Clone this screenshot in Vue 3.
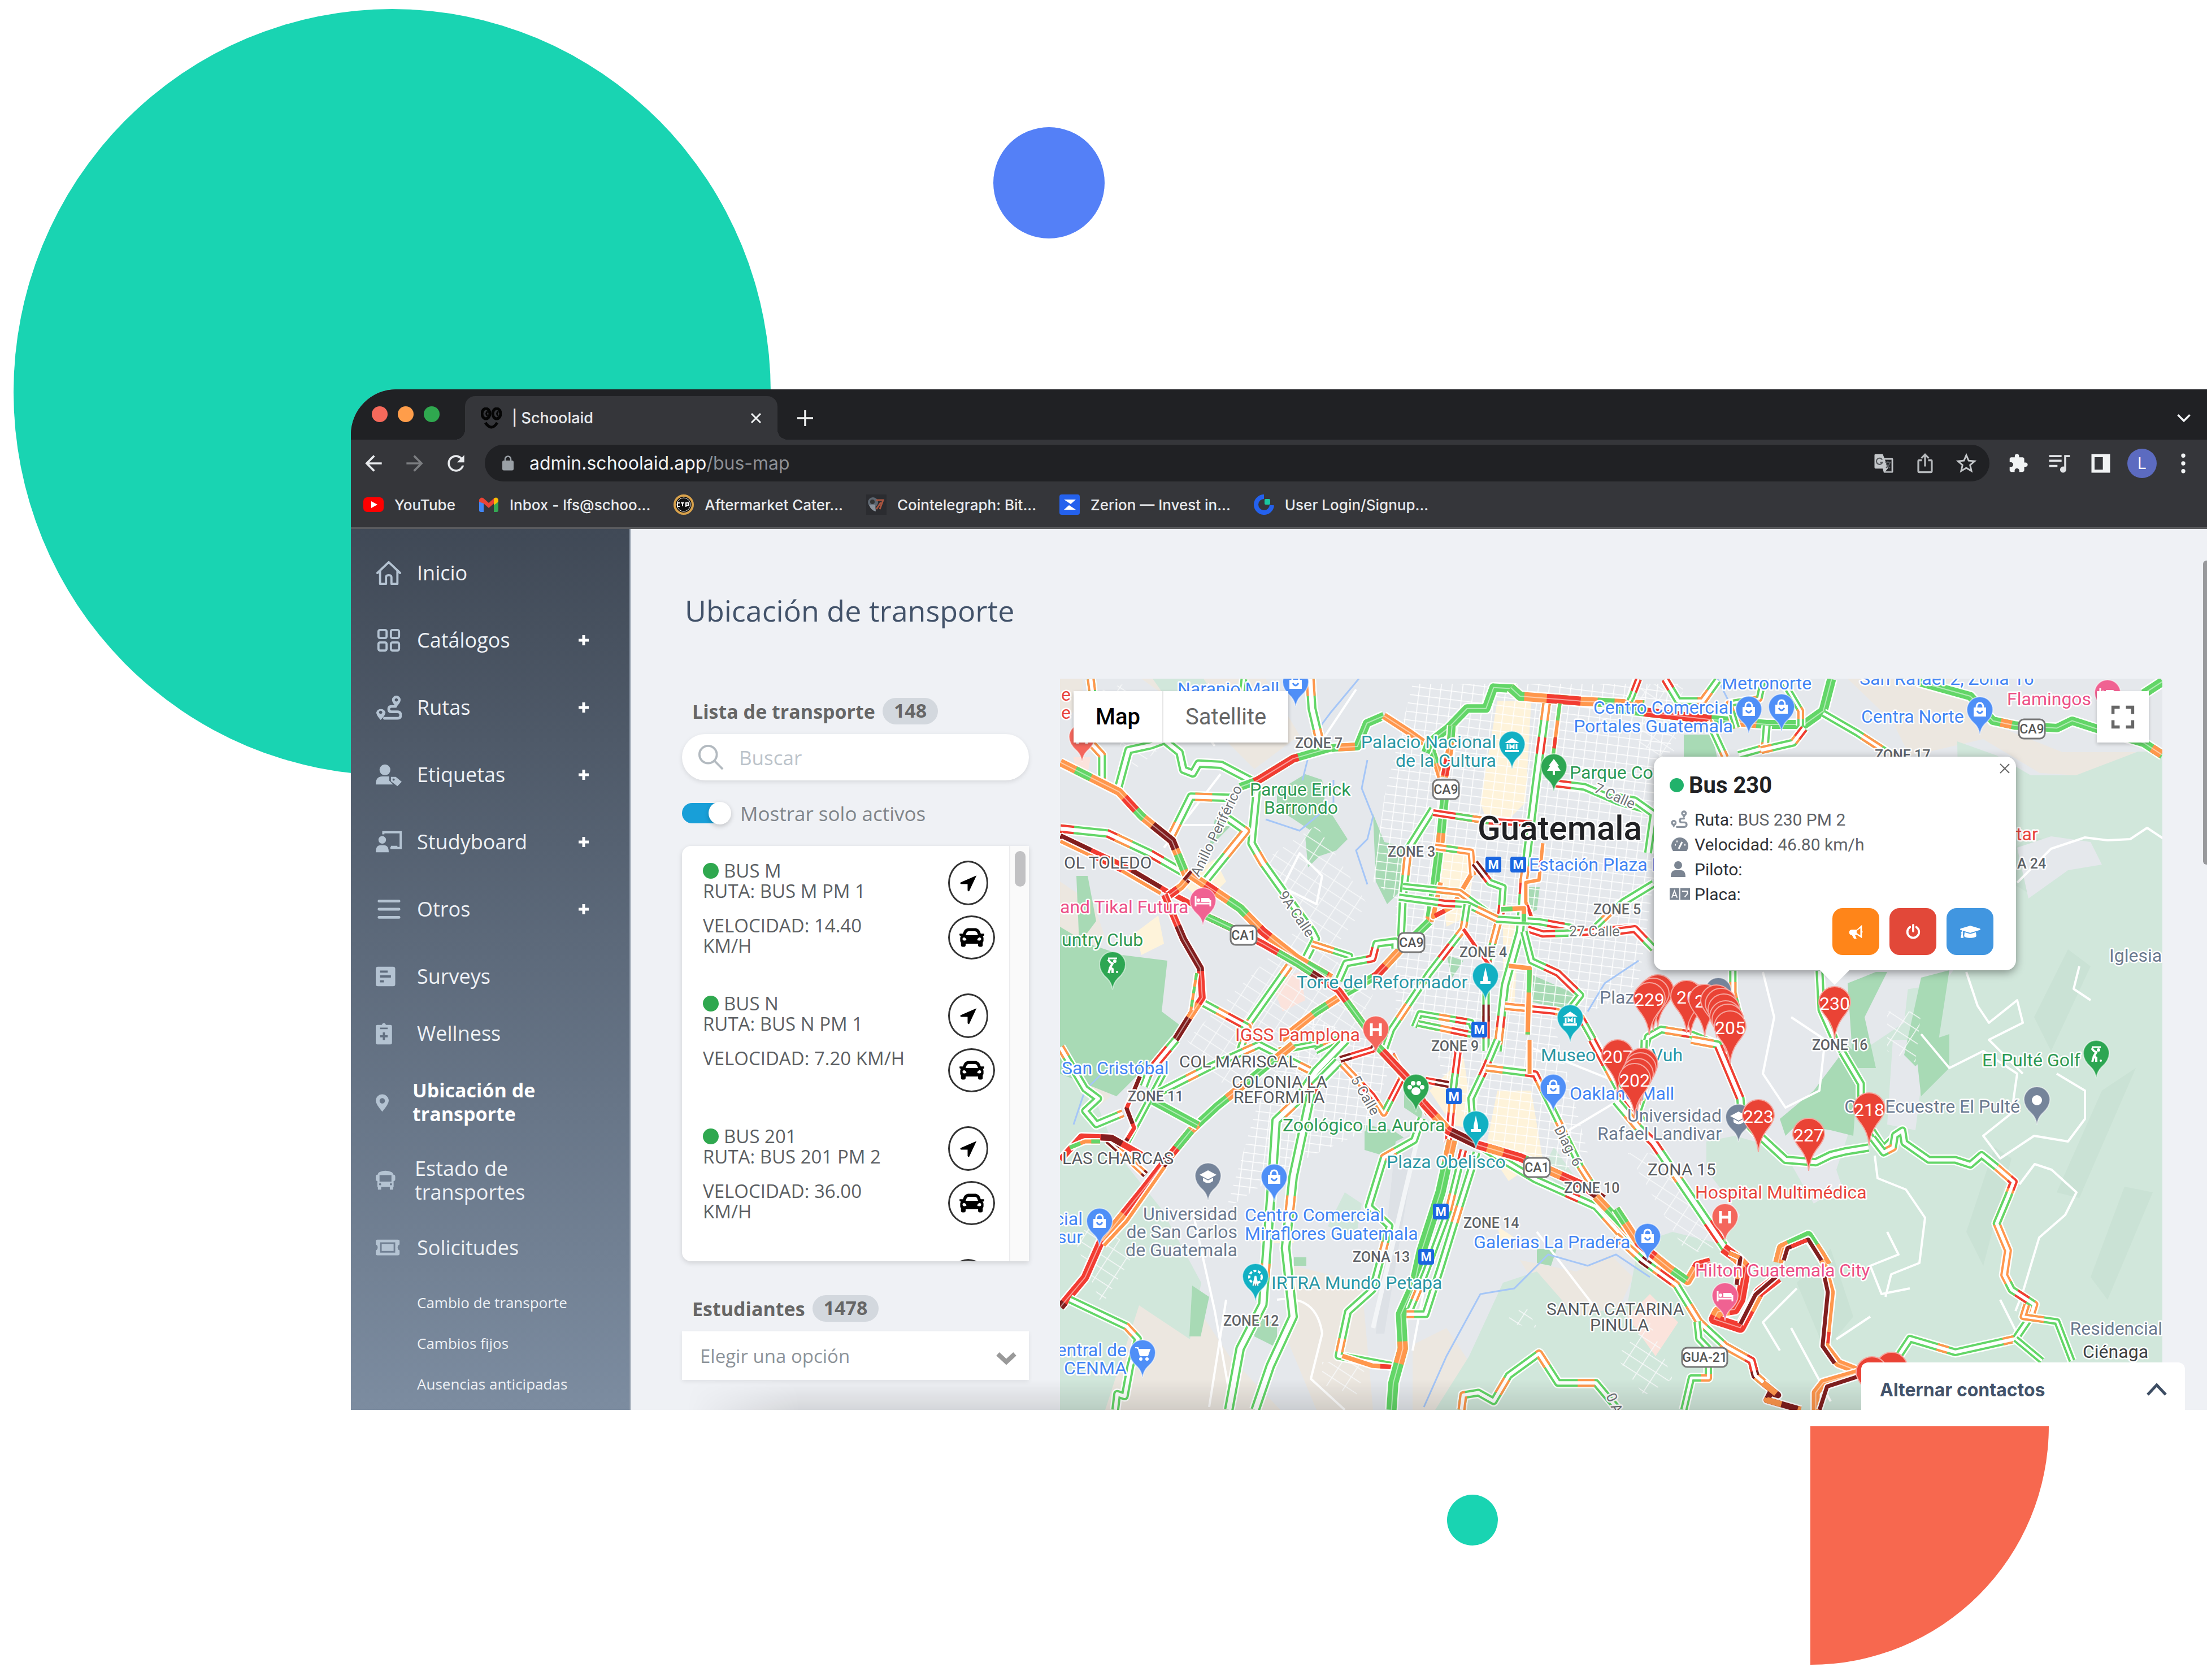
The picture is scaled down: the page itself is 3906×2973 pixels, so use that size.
<script setup>
import { ref } from 'vue'

const search = ref('')
const onlyActive = ref(true)
const student = ref('')

const icons = {
  back: ['0 0 24 24', '<path fill="#e8eaed" d="M20 11H7.83l5.59-5.59L12 4l-8 8 8 8 1.41-1.41L7.83 13H20v-2z"/>'],
  forward: ['0 0 24 24', '<path fill="#7b7d80" d="M4 11h12.17l-5.59-5.59L12 4l8 8-8 8-1.41-1.41L16.17 13H4v-2z"/>'],
  reload: ['0 0 24 24', '<path fill="#e8eaed" d="M17.65 6.35C16.2 4.9 14.21 4 12 4c-4.42 0-7.99 3.58-7.99 8s3.57 8 7.99 8c3.73 0 6.84-2.55 7.73-6h-2.08c-.82 2.33-3.04 4-5.65 4-3.31 0-6-2.69-6-6s2.69-6 6-6c1.66 0 3.14.69 4.22 1.78L13 11h7V4l-2.35 2.35z"/>'],
  lock: ['0 0 24 24', '<path fill="#9aa0a6" d="M18 8h-1V6c0-2.76-2.24-5-5-5S7 3.24 7 6v2H6c-1.1 0-2 .9-2 2v10c0 1.1.9 2 2 2h12c1.1 0 2-.9 2-2V10c0-1.1-.9-2-2-2zM15.1 8H8.9V6c0-1.71 1.39-3.1 3.1-3.1s3.1 1.39 3.1 3.1v2z"/>'],
  translate: ['0 0 24 24', '<path fill="#c4c7ca" d="M4 3h7l1.5 4H20q1 0 1 1v12q0 1-1 1h-8l-1-4H4q-1 0-1-1V4q0-1 1-1z"/><path fill="#202124" d="M13 8.2h6.8v11.6H13.5l2.5-3z"/><path d="M10.5 8.5a3 3 0 1 0 .2 2.5H8.5M13.5 11h5.5M16 10v1M18 11q-1 4-4 5M14.5 12.5q1 2.5 3.5 4" fill="none" stroke="#55585c" stroke-width="1.2"/><path d="M13 8.2h6.8v11.6H13.5" fill="none" stroke="#a5a8ab" stroke-width=".8"/>'],
  share: ['0 0 24 24', '<path fill="none" stroke="#b6b9bc" stroke-width="1.8" d="M9 9H6.5Q5.5 9 5.5 10v9.5q0 1 1 1h11q1 0 1-1V10q0-1-1-1H15M12 15V3.5M8.5 7 12 3.5 15.5 7"/>'],
  star: ['0 0 24 24', '<path fill="#c4c7ca" d="M22 9.24l-7.19-.62L12 2 9.19 8.63 2 9.24l5.46 4.73L5.82 21 12 17.27 18.18 21l-1.63-7.03L22 9.24zM12 15.4l-3.76 2.27 1-4.28-3.32-2.88 4.38-.38L12 6.1l1.71 4.04 4.38.38-3.32 2.88 1 4.28L12 15.4z"/>'],
  puzzle: ['0 0 24 24', '<path fill="#f1f3f4" transform="translate(2 2) scale(.83)" d="M20.5 11H19V7c0-1.1-.9-2-2-2h-4V3.5C13 2.12 11.88 1 10.5 1S8 2.12 8 3.5V5H4c-1.1 0-1.99.9-1.99 2v3.8H3.5c1.49 0 2.7 1.21 2.7 2.7s-1.21 2.7-2.7 2.7H2V20c0 1.1.9 2 2 2h3.8v-1.5c0-1.49 1.21-2.7 2.7-2.7 1.49 0 2.7 1.21 2.7 2.7V22H17c1.1 0 2-.9 2-2v-4h1.5c1.38 0 2.5-1.12 2.5-2.5S21.88 11 20.5 11z"/>'],
  music: ['0 0 24 24', '<path fill="#e1e3e6" d="M14 4H2v2h12V4zm0 4.5H2v2h12v-2zM2 15.5h8v-2H2v2zM16.5 4v11.18a3 3 0 1 0 2 2.82V6H22V4z"/>'],
  panel: ['0 0 24 24', '<path fill="#f1f3f4" fill-rule="evenodd" d="M3 3h18v18H3zM6 6v12h8V6z"/>'],
  dots: ['0 0 24 24', '<g fill="#f1f3f4"><circle cx="12" cy="4.5" r="2"/><circle cx="12" cy="12" r="2"/><circle cx="12" cy="19.5" r="2"/></g>'],
  close: ['0 0 24 24', '<path fill="none" stroke="#f1f3f4" stroke-width="3" d="M4 4l16 16M20 4 4 20"/>'],
  plus: ['0 0 24 24', '<path fill="none" stroke="#f1f3f4" stroke-width="3" d="M12 0v24M0 12h24"/>'],
  chevron: ['0 0 24 24', '<path fill="none" stroke="#f1f3f4" stroke-width="3" d="M3 7l9 9 9-9"/>'],
  face: ['0 0 37 38', '<g fill="none" stroke="#050505" stroke-width="5"><ellipse cx="9" cy="11" rx="7" ry="9"/><ellipse cx="28" cy="11" rx="7" ry="9"/><path d="M8 27q11 16 21 0"/></g><path d="M12 7q-5 4 0 8M31 7q-5 4 0 8" fill="none" stroke="#050505" stroke-width="3"/>'],
  youtube: ['0 0 36 36', '<rect y="5" width="36" height="26" rx="7" fill="#f00"/><path fill="#fff" d="M14 12l11 6-11 6z"/>'],
  gmail: ['0 0 36 36', '<path fill="#4285f4" d="M1 9h8v22H4q-3 0-3-3z"/><path fill="#34a853" d="M27 9h8v19q0 3-3 3h-5z"/><path fill="#ea4335" d="M1 9q4-6 8-2l9 8 9-8v9l-9 8-9-8L1 13z"/><path fill="#fbbc04" d="M27 7q5-4 8 2v4l-8 6z"/>'],
  ctp: ['0 0 36 36', '<circle cx="18" cy="18" r="16" fill="#111" stroke="#d9a24c" stroke-width="4"/><circle cx="18" cy="18" r="12" fill="none" stroke="#eee" stroke-width="1"/><path d="M11 15H7v6h4M13 15h6M16 15v6M22 22v-7h5v4h-5" fill="none" stroke="#fff" stroke-width="2"/>'],
  coin: ['0 0 36 36', '<rect width="36" height="36" fill="#2b2c30"/><ellipse cx="12" cy="14" rx="9" ry="9" fill="#5d6670"/><path d="M5 18q3 10 12 12l-1-12z" fill="#8b939c"/><path d="M18 10h12l-6 16M26 14l-8 12" fill="none" stroke="#a8543f" stroke-width="3"/><circle cx="11" cy="13" r="4" fill="#333"/>'],
  zerion: ['0 0 36 36', '<rect width="36" height="36" rx="4" fill="#2461ed"/><path fill="#fff" d="M8 9h21l-9 8zM8 27h21L17 19z"/>'],
  login: ['0 0 36 36', '<path d="M18 4a14 14 0 1 0 14 15" fill="none" stroke="#2461ed" stroke-width="8"/><rect x="19" y="8" width="10" height="10" rx="2" fill="#19c8a0"/>'],
  home: ['0 0 48 48', '<path fill="none" stroke="currentColor" stroke-width="4" stroke-linejoin="round" stroke-linecap="round" d="M3 24 24 4l21 20M8 20v24h11V32q0-4 5-4t5 4v12h11V20"/>'],
  grid: ['0 0 48 48', '<g fill="none" stroke="currentColor" stroke-width="4"><rect x="5" y="5" width="15" height="15" rx="3"/><rect x="28" y="5" width="15" height="15" rx="3"/><rect x="5" y="28" width="15" height="15" rx="3"/><rect x="28" y="28" width="15" height="15" rx="3"/></g>'],
  route: ['0 0 48 48', '<path fill="none" stroke="currentColor" stroke-width="5" stroke-linecap="round" d="M16 44h24q6 0 6-6t-6-6H29q-5 0-5-5t5-5h8"/><path fill="currentColor" fill-rule="evenodd" d="M9 47Q1 38 1 33a9 9 0 0 1 17 0q0 5-9 14zm0-17a3 3 0 1 0 .1 0zM38 23q-8-8-8-13a8 8 0 0 1 16 0q0 5-8 13zm0-16a3 3 0 1 0 .1 0z"/>'],
  usertag: ['0 0 48 48', '<circle cx="17" cy="15" r="10" fill="currentColor"/><path fill="currentColor" d="M0 42q0-15 12-15h13v8l7 7z"/><path fill="currentColor" fill-rule="evenodd" d="M28 28h9l11 9-8 8-12-9zm5 3a2 2 0 1 0 .1 0z"/>'],
  board: ['0 0 48 48', '<circle cx="12" cy="20" r="7" fill="currentColor"/><path fill="currentColor" d="M0 43q0-13 9-13h6q9 0 9 13zM28 36v-5h12v5z"/><path fill="none" stroke="currentColor" stroke-width="4" d="M14 10V6h32v29H27"/>'],
  bars: ['0 0 48 48', '<path stroke="currentColor" stroke-width="5" stroke-linecap="round" d="M6 9h37M6 24h37M6 39h37"/>'],
  survey: ['0 0 48 48', '<path fill="currentColor" fill-rule="evenodd" d="M4 6h28q4 0 4 4v28q0 4-4 4H4q-4 0-4-4V10q0-4 4-4zm4 7v4h14v-4zm0 9v4h20v-4zm0 9v4h7v-4z"/>'],
  clip: ['0 0 48 48', '<path fill="currentColor" fill-rule="evenodd" d="M3 8h8q4-7 8 0h8q3 0 3 3v30q0 3-3 3H3q-3 0-3-3V11q0-3 3-3zm5 5v3h14v-3zm5 9v5H8v4h5v5h4v-5h5v-4h-5v-5z"/>'],
  pin: ['0 0 48 48', '<path fill="currentColor" fill-rule="evenodd" d="M12 42Q0 28 0 22a12 12 0 0 1 24 0q0 6-12 20zm0-25a5 5 0 1 0 .1 0z"/>'],
  bus: ['0 0 48 48', '<path fill="currentColor" fill-rule="evenodd" d="M8 8q10-4 20 0 4 1 4 5 4 0 4 4v5q0 3-3 3v11h-1v5h-6v-5H10v5H4v-5H3V25q-3 0-3-3v-5q0-4 4-4 0-4 4-5zm-1 6v12h22V14zm1 15a2 2 0 1 0 .1 0zm20 0a2 2 0 1 0 .1 0z"/>'],
  ticket: ['0 0 48 48', '<path fill="currentColor" fill-rule="evenodd" d="M3 9h38q3 0 3 3v6a6 6 0 0 0 0 11v6q0 3-3 3H3q-3 0-3-3v-6a6 6 0 0 0 0-11v-6q0-3 3-3zm5 5v19h28V14zm3 3h22v13H11z"/>'],
  arrow: ['0 0 512 512', '<path d="M500 20 20 230q-30 40 20 50h190v190q12 48 50 20z"/>'],
  car: ['0 0 512 512', '<path d="M499.99 176h-59.87l-16.64-41.6C406.38 91.63 365.57 64 319.5 64h-127c-46.06 0-86.88 27.63-103.99 70.4L71.87 176H12.01C4.2 176-1.53 183.34.37 190.91l6 24C7.7 220.25 12.5 224 18.01 224h20.07C24.65 235.73 16 252.78 16 272v48c0 16.12 6.16 30.67 16 41.93V416c0 17.67 14.33 32 32 32h32c17.67 0 32-14.33 32-32v-32h256v32c0 17.67 14.33 32 32 32h32c17.67 0 32-14.33 32-32v-54.07c9.84-11.25 16-25.8 16-41.93v-48c0-19.22-8.65-36.27-22.07-48H494c5.51 0 10.31-3.75 11.64-9.09l6-24c1.89-7.57-3.84-14.91-11.65-14.91zm-352.06-17.83c7.29-18.22 24.94-30.17 44.57-30.17h127c19.63 0 37.28 11.95 44.57 30.17L384 208H128l19.93-49.83zM96 319.8c-19.2 0-32-12.76-32-31.9S76.8 256 96 256s48 28.71 48 47.85-28.8 15.95-48 15.95zm320 0c-19.2 0-48 3.19-48-15.95S396.8 256 416 256s32 12.76 32 31.9-12.8 31.9-32 31.9z"/>'],
  cap: ['0 0 640 512', '<path fill="currentColor" d="M622.34 153.2L343.4 67.5c-15.2-4.67-31.6-4.67-46.79 0L17.66 153.2c-23.54 7.23-23.54 38.36 0 45.59l48.63 14.94c-10.67 13.19-17.23 29.28-17.88 46.9C38.78 266.15 32 276.11 32 288c0 10.78 5.68 19.85 13.86 25.65L20.33 428.53C18.11 438.52 25.71 448 35.94 448h56.11c10.24 0 17.84-9.48 15.62-19.47L82.14 313.65C90.32 307.85 96 298.78 96 288c0-11.57-6.47-21.25-15.66-26.87.76-15.02 8.44-28.3 20.69-36.72L296.6 284.5c9.06 2.78 26.44 6.25 46.79 0l278.95-85.7c23.55-7.24 23.55-38.36 0-45.6zM352.79 315.09c-28.53 8.76-52.84 3.92-65.59 0l-145.02-44.55L128 384c0 35.35 85.96 64 192 64s192-28.65 192-64l-14.18-113.47-145.03 44.56z"/>'],
  horn: ['0 0 32 32', '<path fill="currentColor" fill-rule="evenodd" d="M27 3v11q3 2 0 4v10l-9-6h-4l3 7h-5l-4-7q-5 0-5-5t5-5h9zm-3 6-7 5v4l7 5z"/>'],
  power: ['0 0 32 32', '<path fill="none" stroke="currentColor" stroke-width="4" stroke-linecap="round" d="M16 3v12M10 7a11 11 0 1 0 12 0"/>'],
  search: ['0 0 48 48', '<g fill="none" stroke="#b3bac0" stroke-width="4"><circle cx="19" cy="19" r="16"/><path d="m31 31 15 15"/></g>'],
  gauge: ['0 0 32 32', '<path fill="#7b8592" d="M4 28a15 15 0 1 1 24 0z"/><path d="m14 24 6-12M7 17h2M10 11h2M24 17h2" stroke="#fff" stroke-width="3"/>'],
  person: ['0 0 32 32', '<circle cx="13" cy="9" r="7" fill="#7b8592"/><path fill="#7b8592" d="M0 30q0-12 8-12h10q8 0 8 12z"/>'],
  plate: ['0 0 38 32', '<path fill="#7b8592" d="M0 5h38v22H0z"/><path d="m4 23 5-13 5 13M6 19h6M19 5v22M23 11h10v5l-5 6" fill="none" stroke="#fff" stroke-width="2"/>'],
  route2: ['0 0 48 48', '<path fill="none" stroke="#8a939e" stroke-width="5" stroke-linecap="round" d="M16 44h20q6 0 6-6t-6-6h-7q-5 0-5-5t5-5h6"/><circle cx="8" cy="33" r="5" fill="none" stroke="#8a939e" stroke-width="5"/><path d="m3 37 5 9 5-9z" fill="#8a939e"/><circle cx="35" cy="8" r="5" fill="none" stroke="#8a939e" stroke-width="5"/><path d="m30 12 5 10 5-10z" fill="#8a939e"/>'],
  full: ['0 0 48 48', '<path fill="none" stroke="#666" stroke-width="6" d="M5 18V5h13M30 5h13v13M43 30v13H30M18 43H5V30"/>'],
  up: ['0 0 36 24', '<path fill="none" stroke="#3d4d63" stroke-width="5" d="M2 21 18 4l16 17"/>'],
  down: ['0 0 36 24', '<path fill="none" stroke="#999" stroke-width="8" d="M3 4l15 14L33 4"/>'],
}

const bookmarks = [
  ['youtube', 'YouTube'],
  ['gmail', 'Inbox - lfs@schoo...'],
  ['ctp', 'Aftermarket Cater...'],
  ['coin', 'Cointelegraph: Bit...'],
  ['zerion', 'Zerion — Invest in...'],
  ['login', 'User Login/Signup...'],
]

const menu = [
  { icon: 'home', label: 'Inicio' },
  { icon: 'grid', label: 'Catálogos', more: true },
  { icon: 'route', label: 'Rutas', more: true },
  { icon: 'usertag', label: 'Etiquetas', more: true },
  { icon: 'board', label: 'Studyboard', more: true },
  { icon: 'bars', label: 'Otros', more: true },
  { icon: 'survey', label: 'Surveys' },
  { icon: 'clip', label: 'Wellness', kind: 'short' },
  { icon: 'pin', label: 'Ubicación de transporte', kind: 'current' },
  { icon: 'bus', label: 'Estado de transportes', kind: 'double' },
  { icon: 'ticket', label: 'Solicitudes' },
]
const submenu = ['Cambio de transporte', 'Cambios fijos', 'Ausencias anticipadas']

const buses = [
  { name: 'BUS M', route: 'BUS M PM 1', speed: '14.40' },
  { name: 'BUS N', route: 'BUS N PM 1', speed: '7.20' },
  { name: 'BUS 201', route: 'BUS 201 PM 2', speed: '36.00' },
  { name: 'BUS 202', route: 'BUS 202 PM 2', speed: '21.60' },
]

const G = '#63d668'
const O = '#ff974d'
const R = '#f23c32'
const D = '#811f1f'

// Roads per map quadrant: [points, width, base colour, [[overlay colour, dash pattern]...], hollow]
const quadrants = [
  {
    t: 'translate(1860 1180) scale(.6696 .4337)',
    roads: [
      ['105,50 110,110', 14, G, [[O, '20 200']], 1],
      ['105,310 135,360 135,470', 14, G, [[O, '30 40']], 1],
      ['175,510 205,340 265,320 300,300 340,350 350,420 375,435 390,395 450,400 530,465', 15, G, [], 1],
      ['315,700 370,530 480,535', 15, G, [[O, '30 60']], 1],
      ['25,660 150,680 260,760 350,840', 15, G, [[R, '24 60'], [O, '0 100 30 60']], 1],
      ['545,490 530,720 560,800 620,930 690,1080 700,1110 670,1200', 15, G, [[O, '0 120 24 140']], 1],
      ['460,610 515,670 410,870', 15, G, [[O, '0 40 60 30']], 1],
      ['510,50 505,110', 12, G, [], 1],
      ['685,50 690,170 710,300', 16, G, [[O, '30 60']], 1],
      ['700,345 750,330 810,325 835,230 880,200', 14, G, [[O, '0 40 30 80']]],
      ['880,200 950,270 1005,330 1030,450', 12, O, [[G, '0 90 40 20']]],
      ['1230,90 1170,85 1150,170 1100,170 1050,250 1000,310 990,350', 15, G, []],
      ['1060,240 1055,330 1040,450', 13, O, [[R, '0 60 30 60'], [G, '30 300']]],
      ['1040,540 1030,700 1015,880 1000,1040', 15, G, [[O, '0 60 30 60']]],
      ['1000,1040 920,1160 860,1260 780,1330', 14, G, [[O, '0 60 50 40'], [R, '0 110 30 100']]],
      ['780,1330 700,1410 610,1520', 13, O, [[G, '0 40 30 40']]],
      ['1215,85 1240,120 1400,140 1568,155', 16, O, [[G, '30 50'], [R, '0 70 60 60']]],
      ['1310,150 1280,500 1250,870 1240,1080 1200,1300 1180,1568', 15, G, [[R, '0 60 30 160'], [O, '30 260']], 1],
      ['1345,150 1320,450', 6, O, [[G, '30 30'], [R, '0 60 20 80']]],
      ['1300,720 1290,870 1255,880 1255,960 1280,1060', 6, O, [[R, '0 30 20 50']]],
      ['1010,580 945,740 930,950 925,1110', 14, G, [[O, '0 90 40 60']], 1],
      ['1010,595 1160,630 1270,640', 12, R, [[G, '0 40 60 60'], [O, '0 70 20 200']], 1],
      ['1015,735 1110,755 1115,850', 12, O, [[G, '0 20 20 50']], 1],
      ['1110,850 1060,980 1010,1020 1030,880', 8, O, [[R, '0 80 20 80']]],
      ['1120,800 1160,880 1195,900 1190,1000 1150,1230 1150,1568', 13, G, [[R, '40 60'], [D, '30 250'], [O, '0 130 40 90']], 1],
      ['930,895 1080,920 1160,1010', 12, G, [[O, '0 60 60 60']], 1],
      ['920,940 1040,965 1100,970 1180,1030 1290,1040 1380,1065', 13, G, [[R, '0 70 30 100'], [O, '0 140 40 100']], 1],
      ['1260,1070 1300,1090 1400,1085 1500,1070 1540,1065 1568,1110', 13, R, [[G, '0 50 40 60']], 1],
      ['1100,970 1090,1070 1000,1250 900,1480 880,1568', 13, G, [[R, '0 80 30 110'], [O, '0 30 30 120']], 1],
      ['1090,1070 1140,1180 1170,1240', 6, R, []],
      ['690,1130 790,1180 790,1220', 12, G, [[O, '40 60']], 1],
      ['760,1280 780,1210 850,1190 860,1130 910,1120 910,1150', 14, G, [[R, '0 70 30 200'], [O, '0 180 60 60']], 1],
      ['630,1220 520,1460', 14, G, [[O, '20 100']], 1],
      ['400,1370 520,1470 500,1568', 14, O, [[G, '30 30'], [R, '0 50 30 80']], 1],
      ['600,1568 760,1520 700,1568', 12, G, [[O, '20 60']], 1],
      ['960,1470 975,1415 1110,1450 1120,1500', 12, G, [[O, '0 60 20 30'], [R, '0 90 20 300']], 1],
      ['970,1455 1110,1500', 12, O, [[G, '40 30'], [R, '0 60 30 90']], 1],
      ['1250,1080 1270,1200 1340,1250 1400,1340 1375,1390', 13, G, [[R, '0 80 70 40']], 1],
      ['1200,1385 1330,1405 1400,1430 1450,1568', 13, R, [[O, '50 40'], [G, '0 150 30 30']], 1],
      ['1210,1220 1265,1230 1260,1500', 8, O, [[G, '0 40 40 30']], 1],
      ['1330,475 1410,490 1500,550 1568,580', 14, G, [[R, '30 400']], 1],
      ['1568,910 1500,970 1440,1060', 12, G, [[O, '0 40 50 50']], 1],
      ['1550,50 1530,140', 12, G, [[R, '20 40']], 1],
      ['1190,990 1250,985 1250,1040', 8, O, [[G, '20 30']], 1],
      ['25,390 180,510 240,610 320,710 360,860', 14, O, [[G, '0 30 30 60'], [R, '0 130 30 60'], [D, '0 200 60 300']]],
      ['25,690 100,745 190,810 300,910 400,990', 9, R, [[D, '60 80']]],
      ['25,712 100,767 190,835 290,925', 6, O, [[R, '0 60 60 40']]],
      ['740,330 640,375 545,465 500,490', 14, G, [[R, '0 60 90 100']]],
      ['375,840 345,895 310,935', 13, O, [[D, '20 20'], [R, '0 40 30 30']]],
      ['300,930 350,1110 395,1230 400,1350 370,1420 310,1568', 12, R, [[D, '0 60 90 30'], [O, '0 210 30 20']]],
      ['385,1250 380,1300 370,1400', 5, O, [[G, '12 12']]],
      ['370,850 500,985 560,1080 650,1190 740,1270', 15, O, [[R, '0 30 24 70'], [G, '0 80 40 60']]],
      ['400,1010 490,1075 560,1130 650,1210 760,1320 850,1510', 12, R, [[D, '0 20 40 120'], [G, '70 80']]],
    ],
  },
  {
    t: 'translate(2860 1180) scale(.6671 .4337)',
    roads: [
      ['0,170 80,185 250,215 400,235 500,235 550,180 572,50', 16, G, [[R, '0 50 120 300'], [O, '0 200 50 50']]],
      ['800,60 940,120 1000,220 1060,240 1170,250 1210,220 1270,250 1400,310 1450,360', 15, G, [[O, '0 170 20 90']]],
      ['1450,60 1400,110', 16, G, []],
      ['550,190 640,270 720,350', 13, G, [[O, '0 80 40 30']], 1],
      ['400,240 395,330 325,360', 14, G, [[O, '0 30 20 60']], 1],
      ['385,340 470,310 500,250', 14, G, [[O, '20 40'], [R, '0 70 20 40']], 1],
      ['245,220 290,370', 13, G, [[O, '20 40']], 1],
      ['130,50 165,140 230,140 270,55', 14, G, [[R, '20 60'], [O, '0 80 30 30']], 1],
      ['60,50 40,130', 12, G, [[R, '24 30']], 1],
      ['390,60 380,130 300,150 320,250', 12, O, [[G, '30 20']], 1],
      ['440,50 490,180 490,240', 12, G, [[O, '0 60 20 20']], 1],
      ['0,530 50,545 100,600 85,760', 14, G, [], 1],
      ['100,885 20,960 0,990', 14, G, [], 1],
      ['0,1080 50,1070 100,1150', 14, R, [[G, '0 60 40 20']], 1],
      ['540,1240 545,1400 580,1520 600,1568', 14, G, [], 1],
      ['310,1240 310,1330 330,1450', 13, G, [[O, '0 20 30 20']], 1],
      ['75,1568 85,1510 120,1480 200,1500 280,1550', 14, G, [[O, '0 60 30 40'], [R, '0 90 14 80']], 1],
    ],
  },
  {
    t: 'translate(1860 1840) scale(.6696 .4337)',
    roads: [
      ['330,0 260,130 245,190', 15, G, [[R, '0 20 60 20']], 1],
      ['25,30 90,200 125,240 90,290 120,345 190,300', 14, G, [[O, '20 200']], 1],
      ['300,130 200,420', 12, G, [], 1],
      ['235,150 200,280 220,360 180,460', 7, R, [[D, '30 30']]],
      ['150,410 180,450 250,550', 12, O, [[D, '24 60']], 1],
      ['25,490 80,395 160,400 240,470', 11, R, [[D, '0 90 40 20']]],
      ['50,440 90,415 130,415', 7, O, [[G, '20 20']]],
      ['280,220 420,110 550,20 690,130', 14, G, [[O, '0 60 20 30']], 1],
      ['780,0 700,130 650,250 595,330 590,450 560,1080 500,1260 470,1510', 17, G, [[O, '0 150 24 120']], 1],
      ['760,90 690,200 640,560 620,850 640,1130 580,1330 540,1510', 17, G, [[O, '0 260 30 120'], [R, '0 60 14 600']], 1],
      ['640,20 440,270 370,370', 14, G, [[O, '40 70']]],
      ['270,250 390,350', 14, G, [[O, '0 90 20 20']]],
      ['370,370 290,520 250,600 130,830 90,970 25,1090', 14, R, [[G, '40 400'], [D, '0 60 20 80'], [O, '0 190 60 70']]],
      ['300,520 200,740 140,840', 6, O, []],
      ['765,80 850,40 870,0', 12, R, [[D, '20 40']], 1],
      ['770,100 850,230 880,300 930,150 900,60', 12, R, [[O, '50 40'], [G, '0 120 20 40']], 1],
      ['1060,185 990,165', 12, R, [[D, '30 30']], 1],
      ['980,320 960,410 880,480 840,680 895,760 850,1020 785,1110 760,1290 900,1330', 14, G, [[O, '0 80 24 90']], 1],
      ['770,1290 850,1330 900,1335', 8, O, [[R, '0 70 40 20']], 1],
      ['1080,0 1065,180 1050,420', 13, R, [[G, '0 60 50 60'], [O, '0 110 20 70']], 1],
      ['1180,0 1150,110 1110,240 1120,430', 13, G, [[R, '0 40 30 60']], 1],
      ['1150,115 1280,140 1400,520 1450,640', 13, G, [[O, '30 60'], [R, '0 70 30 200']], 1],
      ['1265,0 1265,140', 7, O, []],
      ['1430,0 1500,200 1568,340', 14, G, [[R, '50 50'], [O, '0 60 20 60']], 1],
      ['1140,440 1280,570 1440,680 1568,900', 14, G, [[R, '0 170 24 80'], [O, '0 250 50 30']], 1],
      ['1060,410 1030,620 980,860 960,1000 925,1120 930,1260 905,1400 900,1510', 18, G, [[O, '40 330']]],
      ['1090,450 1050,700 990,950 950,1100', 13, G, [[O, '0 80 30 60'], [R, '30 300']], 1],
      ['1125,460 1080,680 1030,930 990,1120 940,1120', 14, G, [[O, '0 100 30 90']], 1],
      ['865,30 950,170 1000,300', 14, G, [[R, '0 10 80 20']]],
      ['985,260 1050,370 1130,430 1240,480 1400,590 1460,650', 15, R, [[O, '0 30 30 50'], [D, '0 70 50 150'], [G, '0 210 40 50']]],
      ['1440,640 1568,850', 14, G, [[O, '30 40']]],
      ['50,1060 200,1170 230,1220 210,1330 195,1455 175,1445 170,1510', 14, G, [[O, '0 110 20 100']], 1],
      ['1085,1510 1090,1450 1130,1440 1170,1475 1210,1370 1290,1280 1340,1400 1440,1400 1500,1510', 14, G, [[O, '30 70']], 1],
    ],
  },
  {
    t: 'translate(2860 1840) scale(.6671 .4337)',
    roads: [
      ['200,0 270,20 330,240 335,320 380,390 450,490 530,500 570,470 610,455 670,440', 15, G, [[R, '0 50 100 500'], [O, '40 800']], 1],
      ['680,370 710,440 750,380', 12, G, [], 1],
      ['680,400 710,460 735,440 740,390 760,370 765,420 830,490 900,490 940,510 970,470 1010,520', 14, G, [[O, '0 40 12 400']], 1],
      ['1010,520 1055,580 1040,640 1010,750 1040,860 1030,960 1050,1020 1110,1080 1100,1130', 14, O, [[G, '0 60 60 50'], [R, '0 30 24 170']], 1],
      ['1100,1130 1060,1220 900,1275 780,1220 750,1290', 14, G, [[O, '0 50 20 50']], 1],
      ['1090,1080 1080,1130 1170,1150 1190,1230 1210,1310', 12, G, [[O, '60 500']], 1],
      ['1060,1220 1130,1310', 12, G, [], 1],
      ['600,50 650,180 650,240', 14, G, [], 1],
      ['75,0 70,240 50,330', 13, G, [], 1],
      ['0,250 60,360 100,420 290,850', 16, G, [[O, '0 30 30 60'], [R, '0 80 40 70']], 1],
      ['0,690 60,830 140,930 190,985 215,920 250,905', 14, O, [[R, '0 70 40 30'], [G, '30 120']]],
      ['0,800 70,900 160,1000 220,1150 290,1250 360,1310 370,1370 400,1410', 14, G, [[O, '50 40'], [D, '0 60 20 200'], [R, '0 100 30 90']], 1],
      ['390,1400 430,1450 410,1440 400,1470 490,1510', 11, D, [[O, '30 30']]],
      ['215,1150 220,1220 245,1260 245,1380 200,1380 180,1510', 13, G, [[O, '0 100 20 80']], 1],
      ['285,850 320,890 345,930 330,1060 315,1100 270,1110 260,1140 330,1175 380,1030 430,970', 18, R, [[O, '0 20 30 70']]],
      ['300,870 330,890 320,1000', 7, D, [[O, '20 20']]],
      ['330,1160 370,1040 430,960', 7, D, []],
      ['430,910 440,850 510,800 540,870 560,920', 17, G, [[O, '40 60']]],
      ['445,900 455,850 510,815 545,900', 7, D, [[R, '0 30 30 60']]],
      ['550,920 570,1030 555,1250 590,1320 640,1350', 14, O, [[R, '0 120 20 40']]],
      ['548,930 562,1030 548,1250 580,1320', 7, D, []],
      ['640,1360 550,1400 530,1440 530,1510', 14, O, []],
      ['640,1375 560,1415 540,1510', 7, D, []],
    ],
  },
]

// Labels: [text, x, baseline, class, anchor]
const labels = [
  ['Naranjo Mall', 2084, 1230, 'blue'],
  ['Centro Comercial', 3067, 1263, 'blue', 'end'], ['Portales Guatemala', 3067, 1296, 'blue', 'end'],
  ['Metronorte', 3047, 1220, 'blue'], ['San Rafael 2, Zona 16', 3291, 1212, 'blue'],
  ['Centra Norte', 3294, 1279, 'blue'], ['Estación Plaza B', 2706, 1541, 'blue'],
  ['San Cristóbal', 1879, 1901, 'blue'], ['Oakland Mall', 2778, 1946, 'blue'],
  ['Centro Comercial', 2203, 2161, 'blue'], ['Miraflores Guatemala', 2203, 2194, 'blue'],
  ['Galerias La Pradera', 2608, 2209, 'blue'],
  ['cial', 1916, 2168, 'blue', 'end'], ['sur', 1916, 2200, 'blue', 'end'],
  ['entral de', 1994, 2400, 'blue', 'end'], ['CENMA', 1994, 2432, 'blue', 'end'],
  ['Palacio Nacional', 2648, 1324, 'teal', 'end'], ['de la Cultura', 2648, 1357, 'teal', 'end'],
  ['Torre del Reformador', 2295, 1749, 'teal'], ['Plaza Obelisco', 2454, 2067, 'teal'],
  ['IRTRA Mundo Petapa', 2250, 2281, 'teal'], ['Museo', 2727, 1878, 'teal'], ['Vuh', 2978, 1878, 'teal', 'end'],
  ['Plaz', 2831, 1776, 'slate'],
  ['Parque Erick', 2212, 1408, 'green'], ['Barrondo', 2237, 1440, 'green'], ['Parque Co', 2778, 1378, 'green'],
  ['untry Club', 1879, 1674, 'green'], ['Zoológico La Aurora', 2270, 2002, 'green'], ['El Pulté Golf', 3508, 1887, 'green'],
  ['IGSS Pamplona', 2186, 1842, 'red'], ['Hospital Multimédica', 3000, 2121, 'red'], ['tar', 3568, 1487, 'red'],
  ['e', 1878, 1240, 'red'], ['e', 1878, 1272, 'red'],
  ['and Tikal Futura', 1876, 1616, 'pink'], ['Flamingos', 3552, 1248, 'pink'], ['Hilton Guatemala City', 3000, 2259, 'pink'],
  ['Universidad', 2190, 2159, 'slate', 'end'], ['de San Carlos', 2190, 2191, 'slate', 'end'], ['de Guatemala', 2190, 2223, 'slate', 'end'],
  ['Universidad', 3047, 1985, 'slate', 'end'], ['Rafael Landivar', 3047, 2017, 'slate', 'end'],
  ['Club Ecuestre El Pulté', 3575, 1969, 'slate', 'end'], ['Iglesia', 3733, 1702, 'slate'],
  ['Residencial', 3827, 2362, 'slate', 'end'], ['Ciénaga', 3686, 2403, 'dark'],
  ['ZONE 7', 2292, 1324, 'zone'], ['ZONE 3', 2456, 1516, 'zone'], ['ZONE 5', 2820, 1618, 'zone'], ['ZONE 4', 2583, 1694, 'zone'],
  ['ZONE 9', 2533, 1860, 'zone'], ['ZONE 17', 3318, 1345, 'zone'], ['ZONE 16', 3207, 1858, 'zone'], ['A 24', 3570, 1537, 'zone'],
  ['ZONE 11', 1996, 1949, 'zone'], ['ZONE 10', 2768, 2111, 'zone'], ['ZONE 14', 2590, 2173, 'zone'], ['ZONA 13', 2394, 2233, 'zone'],
  ['ZONE 12', 2165, 2346, 'zone'],
  ['ZONA 15', 2916, 2080, 'area'], ['OL TOLEDO', 1883, 1537, 'area'], ['COL MARISCAL', 2087, 1889, 'area'],
  ['COLONIA LA', 2180, 1925, 'area'], ['REFORMITA', 2183, 1952, 'area'], ['LAS CHARCAS', 1880, 2060, 'area'],
  ['SANTA CATARINA', 2737, 2327, 'area'], ['PINULA', 2814, 2355, 'area'],
  ['27 Calle', 2777, 1657, 'street'], ['Guatemala', 2615, 1486, 'city'],
]
const slanted = [
  ['Anillo Periférico', 2122, 1553, -64], ['9A Calle', 2262, 1584, 56], ['7 Calle', 2820, 1401, 24],
  ['5 Calle', 2390, 1910, 60], ['Diag. 6', 2750, 1998, 62], ['0 Av.', 2842, 2470, 66],
]
const shields = [
  ['CA9', 2559, 1397, 46], ['CA1', 2201, 1655, 46], ['CA9', 2498, 1668, 46], ['CA9', 3596, 1290, 46], ['CA1', 2720, 2066, 46], ['GUA-21', 3017, 2402, 80],
]
const metros = [[2643, 1530], [2687, 1530], [2618, 1822], [2573, 1940], [2550, 2144], [2524, 2224]]

const BAG = '<path d="M-11-5h22V11h-22z" fill="#fff"/><path d="M-6-5q0-8 6-8t6 8" fill="none" stroke="#fff" stroke-width="3"/><path d="M-5 1q5 8 10 0" fill="none" stroke="#4f8ff7" stroke-width="3"/>'
const HOUSE = '<path d="M-13-3 0-12l13 9zM-12 9h24v4h-24z" fill="#fff"/><path d="M-8 8v-9M8 8v-9M-3 7v-6l3 3 3-3v6" fill="none" stroke="#fff" stroke-width="3"/>'
const TOWER = '<path d="m0-16 4 18v6h5v5H-9V8h5V2z" fill="#fff"/>'
const GOLF = '<path d="M-8-12H8" stroke="#fff" stroke-width="3"/><circle cx="4" cy="-7" r="3" fill="#fff"/><path d="M-8-10-4-5 0-3-4 4l4 3v7M-4 4l-3 10" fill="none" stroke="#fff" stroke-width="4"/><circle cx="8" cy="12" r="2" fill="#fff"/>'
const BED = '<path d="M-13-9V9M-13 4H13M13 9V-2" stroke="#fff" stroke-width="3"/><path d="M-3-6H9q4 0 4 7H-3z" fill="#fff"/><circle cx="-8" cy="-2" r="3" fill="#fff"/>'
const HOSP = '<path d="M-8-11V11M8-11V11M-8 0H8" stroke="#fff" stroke-width="5"/>'
const CAP = '<path d="m0-11 15 8L0 5l-15-8z" fill="#fff"/><path d="M-9 2v6q9 7 18 0V2L0 7z" fill="#fff"/>'
const TREE = '<path d="M0-15 9-3H6l6 9H2v7h-4V6h-10l6-9h-3z" fill="#fff"/>'
const PAW = '<g fill="#fff"><ellipse cx="0" cy="6" rx="8" ry="7"/><circle cx="-11" cy="-1" r="4"/><circle cx="-5" cy="-8" r="4"/><circle cx="5" cy="-8" r="4"/><circle cx="11" cy="-1" r="4"/></g>'
const CART = '<path d="M-13-10h5l4 14H9l4-11H-6" fill="#fff" stroke="#fff" stroke-width="2"/><circle cx="-3" cy="10" r="3" fill="#fff"/><circle cx="8" cy="10" r="3" fill="#fff"/>'
const WHEEL = '<circle r="11" fill="none" stroke="#fff" stroke-width="4" stroke-dasharray="5 3"/><path d="M0 0v15M-4 15 0-2l4 17" stroke="#fff" stroke-width="3"/>'
const DOT = '<circle r="9" fill="#fff"/>'
// Place pins: [tip x, tip y, colour, glyph]
const places = [
  [2293, 1251, '#4f8ff7', BAG], [3095, 1299, '#4f8ff7', BAG], [3153, 1295, '#4f8ff7', BAG], [3504, 1300, '#4f8ff7', BAG],
  [2749, 1968, '#4f8ff7', BAG], [2255, 2127, '#4f8ff7', BAG], [1946, 2205, '#4f8ff7', BAG], [2916, 2232, '#4f8ff7', BAG], [2022, 2438, '#4f8ff7', CART],
  [2676, 1361, '#12b0c3', HOUSE], [2779, 1845, '#12b0c3', HOUSE], [2629, 1771, '#12b0c3', TOWER], [2612, 2033, '#12b0c3', TOWER], [2222, 2303, '#12b0c3', WHEEL],
  [2750, 1401, '#2da652', TREE], [1969, 1751, '#2da652', GOLF], [3710, 1908, '#2da652', GOLF], [2506, 1968, '#2da652', PAW],
  [2129, 1638, '#f06292', BED], [3053, 2337, '#f06292', BED], [3730, 1270, '#f06292', BED],
  [2435, 1865, '#f4665c', HOSP], [3053, 2197, '#f4665c', HOSP], [1915, 1348, '#f4665c', HOSP],
  [2138, 2125, '#75849a', CAP], [3077, 2021, '#75849a', CAP], [3605, 1990, '#75849a', DOT], [3041, 1797, '#75849a', DOT],
]
// Live bus markers: [tip x, tip y, number]
const markers = [
  [2934, 1818, ''], [2926, 1824, ''], [2919, 1832, '229'], [2992, 1832, ''], [2985, 1828, '20'], [3017, 1835, '20'],
  [3038, 1836, ''], [3046, 1842, ''], [3051, 1852, '20'], [3054, 1864, ''], [3058, 1870, ''], [3062, 1882, '205'],
  [3247, 1839, '230'], [2863, 1933, '207'], [2906, 1948, ''], [2903, 1956, ''], [2898, 1966, '20'], [2893, 1975, '202'],
  [3112, 2039, '223'], [3201, 2072, '227'], [3308, 2027, '218'], [3348, 2486, ''], [3313, 2494, ''],
]
</script>

<template>
  <div class="hero">
    <span class="shape circle-big"></span>
    <span class="shape circle-blue"></span>
    <span class="shape circle-small"></span>
    <span class="shape quarter"></span>

    <div class="window">
      <header class="chrome">
        <div class="strip">
          <div class="lights"><i></i><i></i><i></i></div>
          <div class="tab">
            <svg class="favicon" :viewBox="icons.face[0]" v-html="icons.face[1]"></svg>
            <span>| Schoolaid</span>
            <button class="bare close" aria-label="Close tab"><svg :viewBox="icons.close[0]" v-html="icons.close[1]"></svg></button>
          </div>
          <button class="bare plus" aria-label="New tab"><svg :viewBox="icons.plus[0]" v-html="icons.plus[1]"></svg></button>
          <button class="bare tabs-menu" aria-label="Search tabs"><svg :viewBox="icons.chevron[0]" v-html="icons.chevron[1]"></svg></button>
        </div>
        <div class="toolbar">
          <button v-for="n in ['back', 'forward', 'reload']" :key="n" class="bare tool" :aria-label="n"><svg :viewBox="icons[n][0]" v-html="icons[n][1]"></svg></button>
          <div class="url">
            <svg class="lock" :viewBox="icons.lock[0]" v-html="icons.lock[1]"></svg>
            <span class="address">admin.schoolaid.app<em>/bus-map</em></span>
            <button v-for="n in ['translate', 'share', 'star']" :key="n" class="bare tool" :aria-label="n"><svg :viewBox="icons[n][0]" v-html="icons[n][1]"></svg></button>
          </div>
          <button v-for="n in ['puzzle', 'music', 'panel']" :key="n" class="bare tool" :aria-label="n"><svg :viewBox="icons[n][0]" v-html="icons[n][1]"></svg></button>
          <button class="bare avatar">L</button>
          <button class="bare tool" aria-label="Menu"><svg :viewBox="icons.dots[0]" v-html="icons.dots[1]"></svg></button>
        </div>
        <nav class="bookmarks">
          <a v-for="b in bookmarks" :key="b[0]" href="#"><svg :viewBox="icons[b[0]][0]" v-html="icons[b[0]][1]"></svg>{{ b[1] }}</a>
        </nav>
      </header>

      <div class="app">
        <nav class="sidebar">
          <a v-for="m in menu" :key="m.label" href="#" class="item" :class="m.kind">
            <svg class="menu-icon" :viewBox="icons[m.icon][0]" v-html="icons[m.icon][1]"></svg>
            <span class="menu-label">{{ m.label }}</span>
            <svg v-if="m.more" class="more" viewBox="0 0 20 20"><path d="M10 1v18M1 10h18" stroke="#fff" stroke-width="5" /></svg>
          </a>
          <a v-for="s in submenu" :key="s" href="#" class="sub">{{ s }}</a>
        </nav>

        <main class="main">
          <h1>Ubicación de transporte</h1>
          <div class="columns">
            <section class="panel">
              <h2>Lista de transporte <span class="badge">148</span></h2>
              <label class="search">
                <svg :viewBox="icons.search[0]" v-html="icons.search[1]"></svg>
                <input v-model="search" type="text" placeholder="Buscar" aria-label="Buscar" />
              </label>
              <label class="toggle"><input v-model="onlyActive" type="checkbox" /><span>Mostrar solo activos</span></label>
              <div class="list">
                <ul>
                  <li v-for="b in buses" :key="b.name">
                    <div class="info">
                      <p class="name"><i></i>{{ b.name }}</p>
                      <p>RUTA: {{ b.route }}</p>
                      <p class="speed">VELOCIDAD: {{ b.speed }} KM/H</p>
                    </div>
                    <div class="actions">
                      <button class="round" aria-label="Ubicar"><svg :viewBox="icons.arrow[0]" v-html="icons.arrow[1]"></svg></button>
                      <button class="round wide" aria-label="Vehículo"><svg :viewBox="icons.car[0]" v-html="icons.car[1]"></svg></button>
                    </div>
                  </li>
                </ul>
                <div class="track"><span></span></div>
              </div>
              <h2 class="second">Estudiantes <span class="badge">1478</span></h2>
              <div class="select">
                <select v-model="student" aria-label="Estudiantes"><option value="">Elegir una opción</option></select>
                <svg :viewBox="icons.down[0]" v-html="icons.down[1]"></svg>
              </div>
            </section>

            <section class="map">
              <svg class="canvas" viewBox="1876 1201 1951 1294" preserveAspectRatio="xMinYMin slice">
                <defs>
                  <pattern id="grid" width="19" height="15" patternUnits="userSpaceOnUse" patternTransform="rotate(7)"><path d="M0 0h19M0 0v15" stroke="#fff" stroke-width="3" /></pattern>
                  <pattern id="grid2" width="28" height="20" patternUnits="userSpaceOnUse" patternTransform="rotate(33)"><path d="M0 0h28M0 0v20" stroke="#f8f9fa" stroke-width="3" /></pattern>
                </defs>
                <rect x="1876" y="1201" width="1951" height="1294" fill="#e5e8ec" />
                <g fill="#ece7e0">
                  <path d="M2020 1201h220l60 100-80 60-60-60zM1876 1201h40v60h-40zM1876 1560l60 40 20 60-80 100zM1876 1900l60-20 30 60-60 50zM3270 1201h190l40 70 150 60 130 0-90 42-80-5-100-60-130 30-30-60z" />
                  <path d="M1876 2200l180 20 120 180 90 95h-340zM2290 2240l120 30 20 225h-100l-50-120zM2500 2380l60-30 40 60-40 85h-60zM2690 2230l100 20 60-30 40 40-40 90-100-20z" />
                </g>
                <path fill="#d1e7db" d="M3464 1312l70 25 60 35h80l110-42h43v1165H2540l60-95 60-130 60-20 70 80 90-20 20-110 60-20 80 20 40-50-60-80v-50l50-10 70 20 70 30 40 10 50-150-30-80 50-80 120-20 30-40z" />
                <path fill="#d1e7db" d="M1876 1880l60 60 40 100 80 100 70 130-20 100-90-60-60 185h-80zM2040 1201h90l40 60-60 40zM2380 2110l30 20-10 60-50-20zM2750 2030l50 70-20 20-50-50z" />
                <path fill="#c5dfd0" d="M3520 1540l70-60 60 10-60 90zM3600 1800l60-120 40 30-70 150zM3640 2110l80-180 60-40-100 230zM3700 2260l60-160 50 10-80 190zM3480 2180l50-150 30 20-50 190zM3180 2270l60-60 40 120-50 60z" opacity=".55" />
                <path fill="#e5e8ec" d="M3230 1720h150l-10 90-60 40-90-30zM3570 1500l60-20 70 10 20 40-60 10-70 50zM3170 2060l70-20 20 60-50 30zM3350 1840h60l-20 160-50-10z" />
                <g fill="#a8dab5">
                  <path d="M1876 1640l50 30 60 20 80 10-10 90 40 30-40 40-80 80-100-40zM1905 1550l20 0 15 80-30 40zM2260 1400l50-30 30 10 10 80-30 10-60-40zM2310 1480l40-50 35 55-20 20-30 10-20 20z" />
                  <path d="M2430 1440l20 50 40 10-15 80-20 20-20-40zM2180 1460l-40 40 10-50zM2705 1570h20l-5 40-20 10zM2700 1720l90 40-10 30-80-20zM2655 1361h25v20h-25zM2485 1910l40 20-10 50-30-20zM2415 1990l50 10 30 20-30 30-50-15zM2110 2275l30 20-15 70-20 0zM2220 2325l40 20v40l-40-20zM2290 2225h22v15h-22zM2720 2210l35 0-10 30-25-5z" />
                  <path d="M2980 1300h50l10 45h-60zM3270 1740l50-20 20 0-40 80 20 90-40 0zM3400 1730l50-13-20 130-40 40-20-20zM3150 1980l60-50 60-80 20 20-10 140-40-10-60-10-20 20zM3390 1850l60-20 0 60-50 50zM2560 1690l30 10-20 30z" />
                </g>
                <g fill="#fef3da">
                  <path d="M2650 1240h60l-10 180-60 60-20-60zM2540 1500h70l-10 120-40 20zM2530 1930l60-60 20 130-40-10zM2650 1930h60l20 120-60 40-40-60zM2090 1560l60-40 20 40-40 40zM2010 1650l40-30 10 50-40 20z" />
                  <path d="M2230 2180h60v20h-60zM2650 2170l30 20-20 20zM2660 1620h30l-10 160h-20z" />
                </g>
                <path fill="#fbe3dc" d="M2250 1740l50-20 10 50-40 20zM1900 1340h30l-5 30h-20zM2880 2330l40-40 50 50-40 60z" />
                <path fill="url(#grid)" d="M2500 1210h470l-40 330-30 200-60 40-170 60-200-50 0-200-40-30 20-150zM2530 1810h220l60 230-40 30-150-60-60-80zM2170 2140l60-200 90-140 150 60-50 140-130 60z" />
                <path fill="url(#grid2)" d="M2100 1840l200-200 130 120-80 160-160 30zM2240 1520l90-60 90 140-60 80-90-80zM2880 2040l60 0 100 130-10 50-50-10zM2860 2400l60-60 40 100-50 30zM1920 1230l70-20 80 100-60 50zM2660 2340l40-30 20 40zM2900 1210h80l-20 140-60-30zM3340 1790h60l-10 90-50-20zM1900 2190l60-40 40 80-50 80zM2340 2410h80l-20 60-60-20z" />
                <g class="minor">
                  <path d="M2140 1210l-30 60 40 50M2400 1220l-80 120-60 20M2060 1500l100-130M2080 1460h120M2110 2140l40 180 30 170M2170 2300l-30 190M2260 2300q70-10 80 60l-20 80 60 55M2440 1830l40 60M2300 1510l40 40-10 50-60-30zM2700 1850l150 60M2860 1950l-100 60M2550 2060l-20 170-30 160M2720 2180l100 130" />
                  <path d="M3570 1562l60-60 60-20 40 5 40-2 30-20 30 20M3574 2096l27-36 30 10 44 40-20 40-46 40-30 100-12 30M3318 2045l5 40 50 20 34 50-10 80-50 20-10 40M3480 1720l20 60 20 30 50-40 10 40-60 30 60 60M3680 1710l-10 40 30 20M3400 1830l50 60 60-30 60 40-10 70-50 40 30 40 60-40 60 10 30-40 0-50-50-30M3170 2350l70 130M3120 1720l20 80-20 100 40 60 60-30 10-90-60-40M3540 2300l30 60-60 30M3340 2180l20 40-50 20 20 50 50-10M3250 2370l60-40M3180 2280l-60 60 30 50" />
                </g>
                <path class="river" d="M2405 1201l-50 60-30 40-20 80M2420 1345l-10 50 20 50-10 40-20 20 20 60M2240 1450l60 20 60-50 0-40M1900 1990l20-60 30-30M2520 2490l40-90 60-110 60-10 60-60 70 20 50-20 60 40M2900 1700l-60 40-30 50M3040 1202l30 60" />
                <path d="M2470 2020l40-20-60 360-15 0z" fill="#dde1e6" /><path d="M2510 2010l-80 340" stroke="#f3f5f7" stroke-width="8" />

                <g v-for="q in quadrants" :key="q.t" :transform="q.t" class="roads">
                  <template v-for="r in q.roads" :key="r[0]">
                    <polyline :points="r[0]" stroke="#fff" :stroke-width="r[1] + 5" />
                    <polyline :points="r[0]" :stroke="r[2]" :stroke-width="r[1]" />
                    <polyline v-for="(o, i) in r[3]" :key="i" :points="r[0]" :stroke="o[0]" :stroke-width="r[1]" :stroke-dasharray="o[1]" />
                    <polyline v-if="r[4]" :points="r[0]" stroke="#fff" :stroke-width="r[1] - 8" />
                    <polyline v-else-if="r[1] > 11" class="median" :points="r[0]" stroke="#fff" stroke-width="2" />
                  </template>
                </g>

                <text v-for="s in slanted" :key="s[0]" class="label street" :transform="`translate(${s[1]} ${s[2]}) rotate(${s[3]})`">{{ s[0] }}</text>
                <g v-for="s in shields" :key="s[1]" :transform="`translate(${s[1]} ${s[2]})`">
                  <rect :x="-s[3] / 2" y="-17" :width="s[3]" height="34" rx="9" fill="#fff" stroke="#777" stroke-width="3" />
                  <text class="shield" y="8" text-anchor="middle">{{ s[0] }}</text>
                </g>
                <g v-for="m in metros" :key="m[0]" :transform="`translate(${m[0]} ${m[1]})`">
                  <rect x="-14" y="-14" width="28" height="28" rx="4" fill="#1a66e0" /><text class="metro" y="8" text-anchor="middle">M</text>
                </g>
                <text v-for="l in labels" :key="l[0] + l[1] + l[2]" :x="l[1]" :y="l[2]" :class="['label', l[3]]" :text-anchor="l[4] || 'start'">{{ l[0] }}</text>
                <g v-for="p in places" :key="p[0]" :transform="`translate(${p[0]} ${p[1]})`">
                  <path :fill="p[2]" stroke="#fff" stroke-opacity=".5" stroke-width="2" d="M0 0q-2-12-9-19-14-12-14-25a23 23 0 0 1 46 0q0 13-14 25Q2-12 0 0z" />
                  <g transform="translate(0 -43)" v-html="p[3]"></g>
                </g>
                <g v-for="(m, i) in markers" :key="i" :transform="`translate(${m[0]} ${m[1]})`">
                  <path fill="#ea4335" stroke="#f6a59d" stroke-width="2" d="M0 0q-2-22-14-38-14-17-14-27a28 28 0 0 1 56 0q0 10-14 27Q2-22 0 0z" />
                  <text class="number" y="-52" text-anchor="middle">{{ m[2] }}</text>
                </g>
              </svg>

              <div class="types"><button class="on">Map</button><button>Satellite</button></div>
              <button class="fullscreen" aria-label="Fullscreen"><svg :viewBox="icons.full[0]" v-html="icons.full[1]"></svg></button>

              <article class="popup">
                <button class="bare dismiss" aria-label="Cerrar"><svg viewBox="0 0 20 20"><path d="m2 2 16 16M18 2 2 18" stroke="#666" stroke-width="2" /></svg></button>
                <h3><i></i>Bus 230</h3>
                <p><svg :viewBox="icons.route2[0]" v-html="icons.route2[1]"></svg><b>Ruta:</b> BUS 230 PM 2</p>
                <p><svg :viewBox="icons.gauge[0]" v-html="icons.gauge[1]"></svg><b>Velocidad:</b> 46.80 km/h</p>
                <p><svg :viewBox="icons.person[0]" v-html="icons.person[1]"></svg><b>Piloto:</b></p>
                <p><svg :viewBox="icons.plate[0]" v-html="icons.plate[1]"></svg><b>Placa:</b></p>
                <div class="buttons">
                  <button class="orange" aria-label="Avisar"><svg :viewBox="icons.horn[0]" v-html="icons.horn[1]"></svg></button>
                  <button class="crimson" aria-label="Apagar"><svg :viewBox="icons.power[0]" v-html="icons.power[1]"></svg></button>
                  <button class="sky" aria-label="Estudiantes"><svg :viewBox="icons.cap[0]" v-html="icons.cap[1]"></svg></button>
                </div>
              </article>
            </section>
          </div>
          <span class="page-scroll"></span>
          <span class="shade"></span>
          <button class="contacts">Alternar contactos <svg :viewBox="icons.up[0]" v-html="icons.up[1]"></svg></button>
        </main>
      </div>
    </div>
  </div>
</template>

<style>
body { margin: 0; background: #fff; }
</style>

<style scoped>
* { box-sizing: border-box; margin: 0; padding: 0; }
.hero { position: relative; overflow: hidden; padding: 689px 0 476px 621px; background: #fff; font-family: "Open Sans", "Noto Sans", sans-serif; }
.shape { position: absolute; border-radius: 50%; }
.circle-big { left: 24px; top: 16px; width: 1340px; height: 1356px; background: #19d4b2; }
.circle-blue { left: 1758px; top: 225px; width: 197px; height: 197px; background: #5480f7; }
.circle-small { left: 2561px; top: 2645px; width: 90px; height: 90px; background: #19d4b2; }
.quarter { left: 3204px; top: 2524px; width: 422px; height: 422px; border-radius: 0 0 100% 0; background: #f7684f; }
svg { display: block; flex: none; }
a { text-decoration: none; color: inherit; }
button { font: inherit; cursor: pointer; }
.bare { border: 0; background: none; flex: none; }

.window { position: relative; overflow: hidden; border-radius: 80px 0 0 0; background: #eff1f5; }
.chrome { background: #35363a; color: #e8eaed; font-family: Inter, sans-serif; border-bottom: 3px solid #5a5b5e; }
.strip { display: flex; align-items: center; height: 89px; padding: 12px 27px 0 37px; background: #202124; }
.lights { display: flex; gap: 18px; margin: 0 45px 14px 0; }
.lights i { width: 28px; height: 28px; border-radius: 50%; background: #f6695b; }
.lights i:nth-child(2) { background: #ff9d4a; }
.lights i:nth-child(3) { background: #2fa84f; }
.tab { position: relative; display: flex; align-items: center; gap: 18px; width: 553px; height: 77px; padding: 0 26px 0 28px; border-radius: 18px 18px 0 0; background: #35363a; font-size: 27px; font-weight: 500; }
.tab::before, .tab::after { content: ""; position: absolute; bottom: 0; width: 18px; height: 18px; }
.tab::before { left: -18px; background: radial-gradient(circle at 0 0, transparent 18px, #35363a 18px); }
.tab::after { right: -18px; background: radial-gradient(circle at 100% 0, transparent 18px, #35363a 18px); }
.favicon { width: 37px; height: 38px; }
.close { margin-left: auto; }
.close svg { width: 24px; height: 24px; }
.plus { margin-left: 35px; }
.plus svg { width: 28px; height: 28px; }
.tabs-menu { margin-left: auto; }
.tabs-menu svg { width: 28px; height: 28px; }
.toolbar { display: flex; align-items: center; gap: 29px; padding: 9px 20px 9px 18px; }
.tool svg { width: 44px; height: 44px; }
.url { flex: 1; display: flex; align-items: center; gap: 29px; height: 65px; padding: 0 19px 0 26px; border-radius: 33px; background: #202124; }
.lock { width: 30px; height: 30px; margin-right: -6px; }
.address { flex: 1; font-size: 32px; line-height: 40px; color: #f1f3f4; }
.address em { font-style: normal; color: #8d9094; }
.avatar { width: 52px; height: 52px; margin: 0 -4px; border-radius: 50%; background: #5c6bc0; color: #fff; font-size: 28px; }
.bookmarks { display: flex; gap: 41px; align-items: center; height: 72px; padding: 0 22px 8px; font-size: 26px; font-weight: 500; white-space: nowrap; }
.bookmarks a { display: flex; align-items: center; gap: 19px; }
.bookmarks svg { width: 36px; height: 36px; }

.app { display: flex; }
.sidebar { flex: none; width: 495px; padding: 18px 0 12px 44px; border-right: 2px solid #8c98a8; background: linear-gradient(#404956, #5d6a7b 48%, #7c8ca0); color: #eef1f5; }
.item { display: flex; align-items: center; height: 119px; font-size: 36px; line-height: 42px; }
.menu-icon { width: 46px; height: 46px; margin-right: 27px; color: #b4c3d2; }
.menu-label { width: 240px; }
.more { width: 20px; height: 20px; margin-left: 45px; }
.item.short { height: 84px; }
.item.current { height: 158px; color: #fff; font-weight: 700; font-size: 34px; }
.item.current .menu-icon { margin-right: 19px; }
.item.double .menu-icon { margin-right: 23px; }
.sub { display: flex; align-items: center; height: 72px; padding: 3px 0 0 73px; font-size: 26px; }

.main { position: relative; flex: 1; min-width: 0; display: flex; flex-direction: column; padding: 108px 79px 0 91px; background: #eff1f5; }
h1 { padding-left: 5px; font-size: 52px; line-height: 72px; font-weight: 400; color: #43536a; }
.columns { flex: 1; display: flex; gap: 55px; margin-top: 85px; }
.panel { flex: none; width: 614px; padding-top: 34px; }
h2 { display: flex; align-items: center; gap: 13px; height: 47px; padding-left: 18px; font-size: 34px; font-weight: 700; color: #666; }
.badge { height: 47px; padding: 0 20px; border-radius: 24px; background: #d3d8de; line-height: 45px; }
.search { display: flex; align-items: center; gap: 27px; height: 82px; margin-top: 17px; padding: 0 28px; border-radius: 41px; background: #fff; box-shadow: 0 3px 8px #0000001a; }
.search svg { width: 46px; height: 46px; }
.search input { flex: 1; min-width: 0; border: 0; outline: 0; background: none; font: 35px "Open Sans", sans-serif; color: #555; }
.search input::placeholder { color: #bcc3ca; opacity: 1; }
.toggle { display: flex; align-items: center; gap: 15px; height: 40px; margin-top: 38px; font-size: 35px; color: #80858a; }
.toggle input { appearance: none; position: relative; width: 88px; height: 36px; border-radius: 18px; background: linear-gradient(90deg, #189fd8 68px, transparent 68px); }
.toggle input::after { content: ""; position: absolute; left: 47px; top: -2px; width: 40px; height: 40px; border-radius: 50%; background: #fff; box-shadow: 0 3px 8px #0003; }
.list { display: flex; height: 735px; margin-top: 38px; overflow: hidden; border-radius: 16px 0 0 16px; background: #fff; box-shadow: 0 3px 10px #0002; }
.list ul { flex: 1; list-style: none; }
.list li { display: flex; height: 235px; padding: 26px 0 0 37px; }
.info { width: 364px; margin-right: 70px; font-size: 33px; line-height: 36px; color: #5c5f63; }
.name { display: flex; align-items: center; gap: 9px; }
.name i { width: 28px; height: 28px; border-radius: 50%; background: #2fa84f; }
.speed { margin-top: 25px; }
.actions { display: flex; flex-direction: column; gap: 18px; }
.round { display: grid; place-items: center; width: 71px; height: 79px; border: 3px solid #333; border-radius: 50%; background: #fff; }
.round svg { width: 30px; height: 30px; }
.round.wide { width: 83px; height: 78px; }
.round.wide svg { width: 44px; height: 44px; }
.track { width: 35px; padding: 9px 6px 0 8px; border-left: 2px solid #ececee; background: #fafafa; }
.track span { display: block; height: 63px; border-radius: 10px; background: #c1c1c3; }
.second { margin-top: 60px; }
.select { position: relative; margin-top: 17px; box-shadow: 0 3px 8px #0001; }
.select select { display: block; width: 100%; height: 86px; padding: 0 32px; appearance: none; border: 0; background: #fff; font: 33px "Open Sans", sans-serif; color: #8d9399; }
.select svg { position: absolute; right: 22px; top: 36px; width: 36px; height: 24px; pointer-events: none; }

.map { position: relative; flex: 1; min-width: 0; font-family: Roboto, sans-serif; }
.canvas { position: absolute; inset: 0; width: 100%; height: 100%; }
.roads polyline { fill: none; vector-effect: non-scaling-stroke; stroke-linejoin: round; }
.median { opacity: .5; }
.minor { fill: none; stroke: #fff; stroke-width: 4; stroke-linejoin: round; }
.river { fill: none; stroke: #a5c6f7; stroke-width: 3; }
.label { font-family: Roboto, sans-serif; font-size: 32px; paint-order: stroke; stroke: #fff; stroke-width: 5px; stroke-linejoin: round; }
.blue { fill: #4285f4; }
.teal { fill: #2a97a5; }
.green { fill: #2e9a54; }
.red { fill: #e8453c; }
.pink { fill: #ec5087; }
.slate { fill: #6b7a90; }
.dark { fill: #3c4043; }
.zone { font-size: 25px; font-weight: 500; fill: #5f6368; }
.area { font-size: 30px; fill: #55595e; }
.street { font-size: 25px; fill: #6f7377; }
.city { font-size: 60px; font-weight: 500; fill: #202124; }
.shield { font: 500 23px Roboto, sans-serif; fill: #555; }
.metro { font: 700 22px Roboto, sans-serif; fill: #fff; }
.number { font: 32px Roboto, sans-serif; fill: #fff; }
.types { position: absolute; left: 24px; top: 22px; display: flex; height: 91px; background: #fff; box-shadow: 0 3px 6px #0004; }
.types button { border: 0; background: none; padding: 0 39px; font-size: 40px; color: #666; }
.types .on { font-weight: 500; color: #000; border-right: 2px solid #e6e6e6; }
.fullscreen { position: absolute; right: 24px; top: 22px; display: grid; place-items: center; width: 92px; height: 91px; border: 0; background: #fff; box-shadow: 0 3px 6px #0003; }
.fullscreen svg { width: 44px; height: 44px; }
.popup { position: absolute; left: 1051px; top: 138px; width: 641px; height: 378px; padding: 24px 40px 26px 28px; border-radius: 18px; background: #fff; box-shadow: 0 4px 16px #0006; color: #5f6368; }
.popup::after { content: ""; position: absolute; left: 294px; top: 100%; border: 26px solid transparent; border-top-color: #fff; border-bottom: 0; }
.popup h3 { display: flex; align-items: center; gap: 9px; height: 52px; margin-bottom: 13px; font-size: 40px; font-weight: 700; color: #202124; }
.popup h3 i { width: 25px; height: 25px; border-radius: 50%; background: #21b26b; }
.popup p { display: flex; align-items: center; gap: 8px; height: 44px; font-size: 30px; }
.popup p svg { width: 36px; height: 32px; }
.popup b { font-weight: 400; color: #303236; }
.dismiss { position: absolute; right: 10px; top: 11px; }
.dismiss svg { width: 20px; height: 20px; }
.buttons { display: flex; justify-content: flex-end; gap: 18px; margin-top: 3px; }
.buttons button { display: grid; place-items: center; width: 83px; height: 83px; border: 0; border-radius: 18px; color: #fff; }
.buttons svg { width: 36px; height: 30px; }
.orange { background: #ff8519; }
.crimson { background: #e24839; }
.sky { background: #4196e0; }
.page-scroll { position: absolute; right: 0; top: 56px; width: 7px; height: 538px; border-radius: 6px 0 0 6px; background: #98999c; }
.shade { position: absolute; left: 100px; right: 60px; bottom: 0; height: 54px; background: linear-gradient(transparent, #0000001c); mask-image: linear-gradient(90deg, transparent, #000 200px); pointer-events: none; }
.contacts { position: absolute; right: 39px; bottom: 0; display: flex; align-items: center; justify-content: space-between; width: 573px; height: 84px; padding: 12px 32px 0 33px; border: 0; border-radius: 12px 12px 0 0; background: #fff; font: 700 32px Inter, sans-serif; color: #43536a; }
.contacts svg { width: 36px; height: 24px; }
</style>
